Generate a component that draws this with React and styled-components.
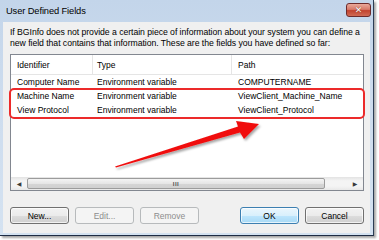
import React from 'react';
import styled, { createGlobalStyle } from 'styled-components';

const GlobalStyle = createGlobalStyle`
  html, body {
    margin: 0;
    padding: 0;
    background: #ffffff;
  }
  body {
    font-family: "Liberation Sans", Arial, sans-serif;
    color: #000;
  }
`;

const Page = styled.div`
  width: 379px;
  height: 240px;
  overflow: hidden;
`;

const Window = styled.div`
  position: relative;
  width: 373px;
  height: 235px;
  display: flex;
  flex-direction: column;
  background: linear-gradient(to bottom, #c3d5ea 0%, #cddcee 40%, #d4e2f1 100%);
  border-right: 1px solid #2b3d55;
  border-bottom: 1px solid #1e2c44;
  box-shadow: 2px 2px 2px rgba(0, 0, 0, 0.35);
`;

const TitleBar = styled.div`
  height: 22px;
  display: flex;
  align-items: center;
  justify-content: space-between;
  padding: 0 2px 0 6px;
  box-sizing: border-box;
`;

const Title = styled.span`
  font-size: 9.3px;
  letter-spacing: -0.1px;
  color: #000;
`;

const CloseButton = styled.div`
  width: 25px;
  height: 14px;
  margin-top: -3px;
  border: 1px solid #6d2b2b;
  border-radius: 3px;
  box-sizing: border-box;
  background: linear-gradient(to bottom, #e9a99b 0%, #d77a6a 45%, #c2432f 55%, #d06b55 100%);
  display: flex;
  align-items: center;
  justify-content: center;
  color: #fff;
  font-size: 9px;
  font-weight: bold;
  font-family: "DejaVu Sans", sans-serif;
  text-shadow: 0 0 1px #5a1a10;
`;

const Client = styled.div`
  flex: 1;
  margin: 0 3px 2px 3px;
  background: #f0f0f0;
  display: flex;
  flex-direction: column;
  padding: 5px 6px 0 7px;
`;

const Intro = styled.p`
  margin: 0;
  font-size: 8.7px;
  line-height: 11px;
  white-space: nowrap;
  letter-spacing: -0.05px;
`;

const ListBox = styled.div`
  margin-top: 5px;
  height: 137px;
  box-sizing: border-box;
  border: 1px solid #828790;
  background: #fff;
  display: flex;
  flex-direction: column;
`;

const HeaderRow = styled.div`
  display: grid;
  grid-template-columns: 82px 139px 1fr;
  height: 19px;
  border-bottom: 1px solid #e5e5e5;
`;

const HeaderCell = styled.div`
  font-size: 8.5px;
  display: flex;
  align-items: center;
  padding-left: ${(p) => p.$pad}px;
  border-right: 1px solid ${(p) => (p.$last ? 'transparent' : '#e5e5e5')};
`;

const Row = styled.div`
  display: grid;
  grid-template-columns: 82px 139px 1fr;
  height: 14px;
  align-items: center;
  font-size: 8.5px;
`;

const Cell = styled.div`
  padding-left: ${(p) => p.$pad}px;
  white-space: nowrap;
`;

const Filler = styled.div`
  flex: 1;
`;

const HScroll = styled.div`
  height: 13px;
  display: flex;
  align-items: center;
  background: linear-gradient(to bottom, #e3e3e3, #f4f4f4 30%, #f4f4f4 70%, #e8e8e8);
`;

const ArrowBtn = styled.div`
  width: 16px;
  height: 13px;
  display: flex;
  align-items: center;
  justify-content: center;
  color: #3a3a3a;
  font-size: 6px;
  font-family: "DejaVu Sans", sans-serif;
`;

const Thumb = styled.div`
  flex: 1;
  height: 11px;
  box-sizing: border-box;
  border: 1px solid #9c9c9c;
  border-radius: 2px;
  background: linear-gradient(to bottom, #f4f4f4 0%, #e6e6e6 50%, #d6d6d6 51%, #d0d0d0 100%);
  display: flex;
  align-items: center;
  justify-content: center;
  margin: 0 22px 0 0;
`;

const Grip = styled.span`
  font-size: 6px;
  color: #555;
  letter-spacing: 0.5px;
  font-weight: bold;
`;

const ButtonRow = styled.div`
  display: flex;
  margin-top: 16px;
  align-items: center;
`;

const Button = styled.div`
  width: 59px;
  height: 17px;
  box-sizing: border-box;
  margin-right: ${(p) => p.$gap || 0}px;
  border: 1px solid ${(p) => (p.$default ? '#3c7fb1' : p.$disabled ? '#b7babc' : '#707070')};
  border-radius: 3px;
  background: ${(p) =>
    p.$default
      ? 'linear-gradient(to bottom, #eaf6fd 0%, #d9f0fc 50%, #bee6fd 51%, #a7d9f5 100%)'
      : p.$disabled
      ? '#f4f4f4'
      : 'linear-gradient(to bottom, #f2f2f2 0%, #ebebeb 50%, #dddddd 51%, #cfcfcf 100%)'};
  box-shadow: ${(p) => (p.$disabled ? 'none' : 'inset 0 0 0 1px rgba(255,255,255,0.7)')};
  color: ${(p) => (p.$disabled ? '#8d8d8d' : '#000')};
  font-size: 8.5px;
  display: flex;
  align-items: center;
  justify-content: center;
`;

const Spacer = styled.div`
  flex: 1;
`;

const Highlight = styled.div`
  position: absolute;
  left: 9px;
  top: 88px;
  width: 356px;
  height: 31px;
  box-sizing: border-box;
  border: 2px solid #ec2a2a;
  border-radius: 5px;
  pointer-events: none;
`;

const ArrowSvg = styled.svg`
  position: absolute;
  left: 0;
  top: 0;
  pointer-events: none;
`;

const columns = [
  { pad: 6 },
  { pad: 4 },
  { pad: 6 },
];

const rows = [
  ['Computer Name', 'Environment variable', 'COMPUTERNAME'],
  ['Machine Name', 'Environment variable', 'ViewClient_Machine_Name'],
  ['View Protocol', 'Environment variable', 'ViewClient_Protocol'],
];

export default function App() {
  return (
    <Page>
      <GlobalStyle />
      <Window>
        <TitleBar>
          <Title>User Defined Fields</Title>
          <CloseButton>✕</CloseButton>
        </TitleBar>
        <Client>
          <Intro>
            If BGInfo does not provide a certain piece of information about your system you can define a
            <br />
            new field that contains that information. These are the fields you have defined so far:
          </Intro>
          <ListBox>
            <HeaderRow>
              <HeaderCell $pad={6}>Identifier</HeaderCell>
              <HeaderCell $pad={4}>Type</HeaderCell>
              <HeaderCell $pad={6} $last>Path</HeaderCell>
            </HeaderRow>
            {rows.map((r) => (
              <Row key={r[0]}>
                {r.map((c, i) => (
                  <Cell key={i} $pad={columns[i].pad}>{c}</Cell>
                ))}
              </Row>
            ))}
            <Filler />
            <HScroll>
              <ArrowBtn>◀</ArrowBtn>
              <Thumb>
                <Grip>III</Grip>
              </Thumb>
              <ArrowBtn>▶</ArrowBtn>
            </HScroll>
          </ListBox>
          <ButtonRow>
            <Button $gap={6}>New...</Button>
            <Button $gap={6} $disabled>Edit...</Button>
            <Button $disabled>Remove</Button>
            <Spacer />
            <Button $default $gap={6}>OK</Button>
            <Button>Cancel</Button>
          </ButtonRow>
        </Client>
        <Highlight />
        <ArrowSvg width="373" height="235" viewBox="0 0 373 235">
          <defs>
            <filter id="shade" x="-20%" y="-50%" width="140%" height="200%">
              <feDropShadow dx="1.5" dy="2" stdDeviation="1.2" floodColor="#000" floodOpacity="0.35" />
            </filter>
          </defs>
          <polygon
            points="115,166.5 238,126.5 236,121 259,124 244,139 240,132.5 116,167.5"
            fill="#f01010"
            filter="url(#shade)"
          />
        </ArrowSvg>
      </Window>
    </Page>
  );
}
